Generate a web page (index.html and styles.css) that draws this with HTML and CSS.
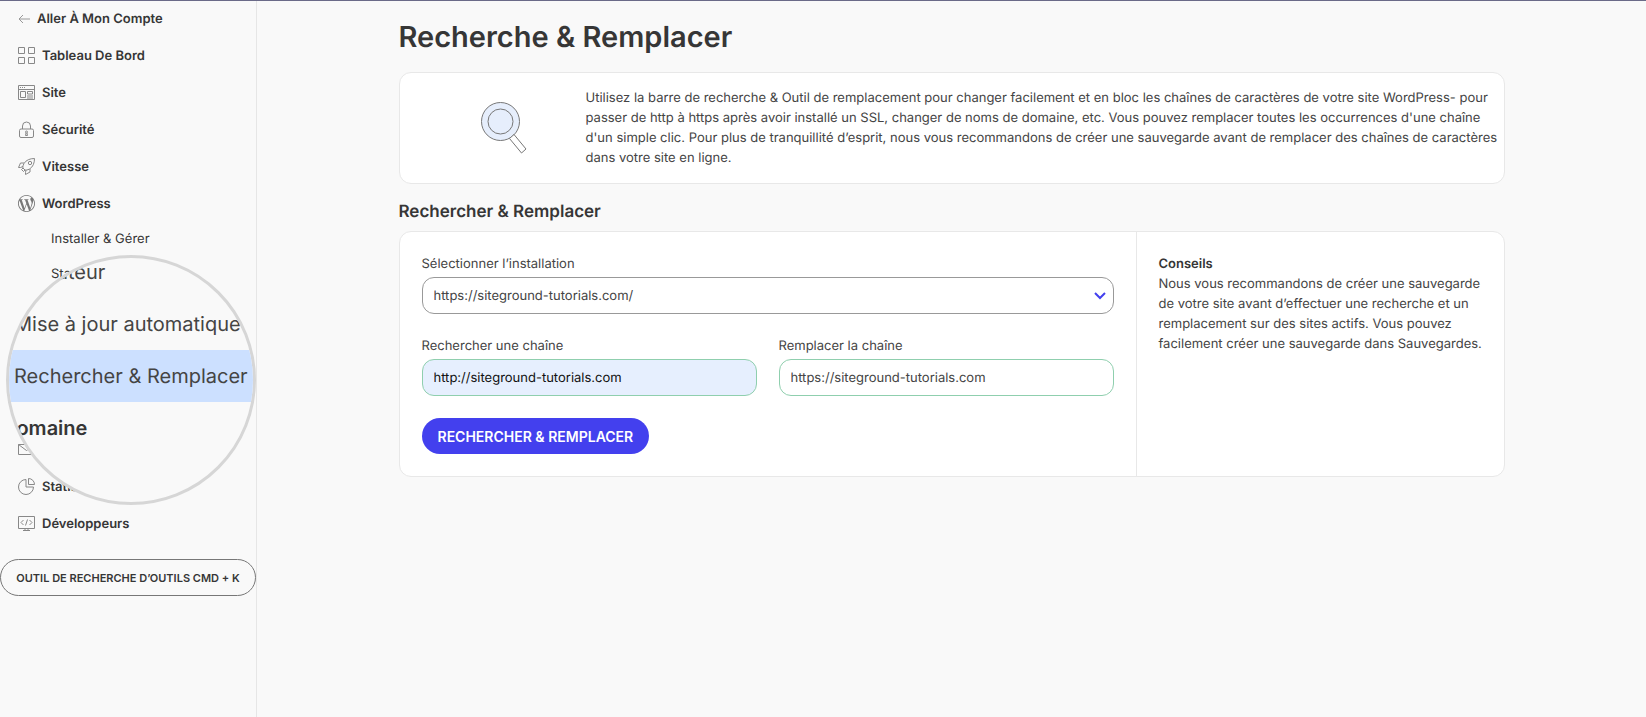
FILE: index.html
```html
<!DOCTYPE html>
<html lang="fr">
<head>
    <meta charset="UTF-8">
    <meta name="viewport" content="width=device-width, initial-scale=1.0">
    <title>Recherche &amp; Remplacer</title>
    <link rel="stylesheet" href="styles.css">
</head>
<body>
    <div class="layout">
        <aside class="sidebar">
            <nav>
                <a href="#" class="back-link">
                    <svg class="back-icon" viewBox="0 0 12 10"><path d="M12 5H1M5 1L1 5l4 4"/></svg>
                    Aller À Mon Compte
                </a>
                <ul class="menu">
                    <li>
                        <a href="#" class="menu-item">
                            <svg class="menu-icon" viewBox="0 0 17 17"><path d="M.5.5h6v6h-6zM10.500.5h6v6h-6zM.5 10.500h6v6h-6zM10.500 10.500h6v6h-6z"/></svg>
                            Tableau De Bord
                        </a>
                    </li>
                    <li>
                        <a href="#" class="menu-item">
                            <svg class="menu-icon" viewBox="0 0 17 17"><path d="M.5 1.500h16v14H.5zM.5 5.500h16M2 3.500h1M4 3.500h1M6 3.500h1M2.500 7.500h5v6h-5zM9.500 7.500h5v2.500h-5zM9 12h6M9 14h6"/></svg>
                            Site
                        </a>
                    </li>
                    <li>
                        <a href="#" class="menu-item">
                            <svg class="menu-icon" viewBox="0 0 17 17"><rect x="1.500" y="8" width="14" height="8.500" rx="1.500"/><path d="M4.500 8V5a4 4 0 0 1 8 0v3M8 12l-.5 2.500h2L9 12"/><circle cx="8.500" cy="11" r="1"/></svg>
                            Sécurité
                        </a>
                    </li>
                    <li>
                        <a href="#" class="menu-item">
                            <svg class="menu-icon" viewBox="0 0 17 17"><path d="M16.500.5C12 .5 8 2 6 5.500c-1.500 2.500-1 4.500-1 4.500l2 2s2.500.3 4.500-1C15 9 16.500 5 16.500.5zM6 5H2.500L.5 9.500h2L5 8.500M12 11v3l-4.500 2.500v-2L8 12M5 10l-1.500 1.500 2 2L7 12"/><circle cx="12" cy="5" r="1.700"/></svg>
                            Vitesse
                        </a>
                    </li>
                    <li>
                        <a href="#" class="menu-item">
                            <svg class="menu-icon menu-icon-solid" viewBox="0 0 24 24"><path d="M21.469 6.825c.84 1.537 1.318 3.3 1.318 5.175 0 3.979-2.156 7.456-5.363 9.325l3.295-9.527c.615-1.540.820-2.771.820-3.864 0-.405-.026-.780-.070-1.110m-7.981.105c.647-.030 1.232-.105 1.232-.105.582-.075.514-.930-.067-.899 0 0-1.755.135-2.880.135-1.064 0-2.850-.150-2.850-.150-.585-.030-.661.855-.075.885 0 0 .540.061 1.125.090l1.680 4.605-2.370 7.080L5.354 6.900c.649-.030 1.234-.100 1.234-.100.585-.075.516-.930-.065-.896 0 0-1.746.138-2.874.138-.200 0-.438-.008-.690-.015C4.911 3.150 8.235 1.215 12 1.215c2.809 0 5.365 1.072 7.286 2.833-.046-.003-.091-.009-.141-.009-1.060 0-1.812.923-1.812 1.914 0 .890.513 1.643 1.060 2.531.411.720.890 1.643.890 2.977 0 .915-.354 1.994-.821 3.479l-1.075 3.585-3.900-11.610zM12 22.784c-1.059 0-2.081-.153-3.048-.437l3.237-9.406 3.315 9.087c.024.053.050.101.078.149-1.120.393-2.325.609-3.582.609M1.211 12c0-1.564.336-3.050.935-4.390L7.290 21.709C3.694 19.960 1.212 16.271 1.211 12M12 0C5.385 0 0 5.385 0 12s5.385 12 12 12 12-5.385 12-12S18.615 0 12 0"/></svg>
                            WordPress
                        </a>
                        <ul class="submenu">
                            <li><a href="#" class="submenu-item">Installer &amp; Gérer</a></li>
                            <li><a href="#" class="submenu-item">Stager</a></li>
                        </ul>
                    </li>
                    <li class="menu-after-lens">
                        <a href="#" class="menu-item" aria-label="E-mail">
                            <svg class="menu-icon" viewBox="0 0 17 17"><path d="M.5 3.500h16v10H.5zM.5 3.500l8 6 8-6"/></svg>
                        </a>
                    </li>
                    <li>
                        <a href="#" class="menu-item">
                            <svg class="menu-icon" viewBox="0 0 17 17"><path d="M8 1.500a7.500 7.500 0 1 0 7.500 7.500H8zM10.500.5v6h6a6 6 0 0 0-6-6z"/></svg>
                            Statistiques
                        </a>
                    </li>
                    <li>
                        <a href="#" class="menu-item">
                            <svg class="menu-icon" viewBox="0 0 17 17"><path d="M.5 1.500h16v12H.5zM5.500 5L3 7.500 5.500 10M11.500 5L14 7.500 11.500 10M9.500 4.500l-2 6M5 15.500h7M7 13.500v2M10 13.500v2"/></svg>
                            Développeurs
                        </a>
                    </li>
                </ul>
            </nav>
            <button type="button" class="tool-search">OUTIL DE RECHERCHE D’OUTILS CMD + K</button>

            <!-- magnifier over the WordPress submenu -->
            <div class="lens">
                <ul class="lens-list">
                    <li class="lens-item">Migrateur</li>
                    <li class="lens-item">Mise à jour automatique</li>
                    <li class="lens-item lens-active">Rechercher &amp; Remplacer</li>
                    <li class="lens-item lens-parent">Domaine</li>
                </ul>
            </div>
        </aside>

        <main class="main">
            <div class="content">
                <h1>Recherche &amp; Remplacer</h1>

                <section class="card intro">
                    <div class="intro-icon">
                        <svg viewBox="0 0 46 52"><circle cx="19.500" cy="19.500" r="19"/><circle cx="19.500" cy="19.500" r="12.500"/><path class="handle" d="M28.500 36.500l4.500-4 12 14.500-4.500 4z"/></svg>
                    </div>
                    <p>Utilisez la barre de recherche &amp; Outil de remplacement pour changer facilement et en bloc les chaînes de caractères de votre site WordPress- pour passer de http à https après avoir installé un SSL, changer de noms de domaine, etc. Vous pouvez remplacer toutes les occurrences d'une chaîne d'un simple clic. Pour plus de tranquillité d’esprit, nous vous recommandons de créer une sauvegarde avant de remplacer des chaînes de caractères dans votre site en ligne.</p>
                </section>

                <h2>Rechercher &amp; Remplacer</h2>

                <section class="card tool">
                    <form class="tool-form">
                        <div class="field">
                            <label for="install">Sélectionner l’installation</label>
                            <div class="select-wrapper">
                                <select id="install">
                                    <option>https://siteground-tutorials.com/</option>
                                </select>
                                <svg class="chevron" viewBox="0 0 12 8"><path d="M1 1l5 5 5-5"/></svg>
                            </div>
                        </div>
                        <div class="field-row">
                            <div class="field">
                                <label for="search">Rechercher une chaîne</label>
                                <input type="text" id="search" class="filled" value="http://siteground-tutorials.com">
                            </div>
                            <div class="field">
                                <label for="replace">Remplacer la chaîne</label>
                                <input type="text" id="replace" value="https://siteground-tutorials.com">
                            </div>
                        </div>
                        <button type="button" class="submit-btn">RECHERCHER &amp; REMPLACER</button>
                    </form>
                    <div class="tips">
                        <h3>Conseils</h3>
                        <p>Nous vous recommandons de créer une sauvegarde de votre site avant d’effectuer une recherche et un remplacement sur des sites actifs. Vous pouvez facilement créer une sauvegarde dans Sauvegardes.</p>
                    </div>
                </section>
            </div>
        </main>
    </div>
</body>
</html>
```

FILE: styles.css
```css
* {
    box-sizing: border-box;
}

body {
    margin: 0;
    font-family: Inter, "Liberation Sans", sans-serif;
    font-size: 13px;
    line-height: 20px;
    color: #444;
    background-color: #f9f9f9;
    border-top: 1px solid #6a6a88;
    text-rendering: geometricPrecision;
}

h1, h2, h3, p, ul {
    margin: 0;
    padding: 0;
}

ul {
    list-style: none;
}

a {
    color: #363636;
    text-decoration: none;
}

.layout {
    display: flex;
    min-height: calc(100vh - 1px);
}

.sidebar {
    position: relative;
    width: 257px;
    flex-shrink: 0;
    border-right: 1px solid #e6e6e6;
}

.back-link {
    display: flex;
    align-items: center;
    gap: 7px;
    height: 36px;
    padding-left: 18px;
    font-weight: 600;
}

.back-icon {
    width: 12px;
    height: 10px;
    fill: none;
    stroke: #999;
}

.menu-item {
    display: flex;
    align-items: center;
    gap: 7px;
    height: 37px;
    padding-left: 18px;
    font-weight: 600;
}

.menu-icon {
    width: 17px;
    height: 17px;
    fill: none;
    stroke: #888;
}

.menu-icon-solid {
    fill: #777;
    stroke: none;
}

.submenu-item {
    display: flex;
    align-items: center;
    height: 35px;
    padding: 0 0 2px 51px;
}

.menu-after-lens {
    margin-top: 139px;
}

.tool-search {
    width: 100%;
    height: 37px;
    margin-top: 17px;
    border: 1px solid #777;
    border-radius: 19px;
    background: none;
    font-family: inherit;
    font-size: 11px;
    font-weight: 600;
    color: #363636;
    white-space: nowrap;
    cursor: pointer;
}

.lens {
    position: absolute;
    top: 254px;
    left: 6px;
    width: 250px;
    height: 250px;
    border: 3px solid #d6d6d6;
    border-radius: 50%;
    background-color: #f9f9f9;
    overflow: hidden;
}

.lens-list {
    margin-top: -12px;
}

.lens-item {
    height: 52px;
    padding-left: 5px;
    font-size: 20px;
    line-height: 52px;
    white-space: nowrap;
}

.lens-active {
    background-color: #cce0ff;
}

.lens-parent {
    margin-left: -12px;
    font-weight: 600;
    color: #363636;
}

.main {
    flex-grow: 1;
    padding: 16px 24px;
}

.content {
    max-width: 1106px;
    margin: 0 auto;
}

h1 {
    margin-bottom: 15px;
    font-size: 29px;
    font-weight: 600;
    line-height: 40px;
    color: #363636;
}

h2 {
    margin: 16px 0 7px;
    font-size: 17px;
    font-weight: 600;
    line-height: 24px;
    color: #363636;
}

.card {
    background-color: #fff;
    border: 1px solid #e8e8e8;
    border-radius: 12px;
}

.intro {
    display: flex;
    padding: 15px 4px 15px 22px;
}

.intro-icon {
    display: flex;
    align-items: center;
    justify-content: center;
    width: 164px;
    flex-shrink: 0;
}

.intro-icon svg {
    width: 46px;
    height: 52px;
    fill: #e6eefc;
    stroke: #777;
}

.intro-icon .handle {
    fill: #fff;
}

.tool {
    display: grid;
    grid-template-columns: 2fr 1fr;
}

.tool-form {
    display: flex;
    flex-direction: column;
    align-items: flex-start;
    gap: 22px;
    padding: 22px;
}

.field {
    display: flex;
    flex-direction: column;
    gap: 3px;
    flex: 1;
    width: 100%;
}

.field-row {
    display: flex;
    gap: 22px;
    width: 100%;
}

.select-wrapper {
    position: relative;
}

select,
input {
    display: block;
    width: 100%;
    height: 37px;
    padding: 0 11px;
    border: 1px solid #999;
    border-radius: 12px;
    background-color: #fff;
    font-family: inherit;
    font-size: 13px;
    color: #444;
    text-rendering: inherit;
    appearance: none;
    outline: none;
}

input {
    border-color: #8fcfae;
}

input.filled {
    background-color: #e6effe;
    color: #111;
}

.chevron {
    position: absolute;
    top: 15px;
    right: 8px;
    width: 12px;
    height: 8px;
    fill: none;
    stroke: #4340ee;
    stroke-width: 2;
    pointer-events: none;
}

.submit-btn {
    height: 36px;
    padding: 0 16px;
    border: none;
    border-radius: 18px;
    background-color: #4340ee;
    font-family: inherit;
    font-size: 14px;
    font-weight: 600;
    color: #fff;
    cursor: pointer;
}

.tips {
    padding: 22px 15px 22px 22px;
    border-left: 1px solid #e8e8e8;
}

h3 {
    font-size: 13px;
    font-weight: 600;
    line-height: 20px;
    color: #363636;
}
```
